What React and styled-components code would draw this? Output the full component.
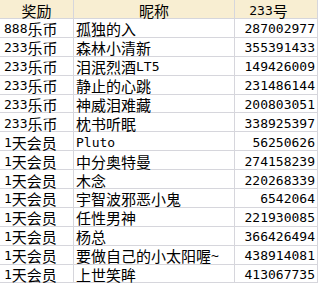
import React from 'react';
import styled, { createGlobalStyle } from 'styled-components';

// ============================================================ styles

const GlobalStyle = createGlobalStyle`
  body {
    margin: 0;
    background: #fff;
  }
`;

const Sheet = styled.div`
  display: grid;
  grid-template-columns: 74px 161px 83px;
  grid-template-rows: 19px repeat(14, 18.9px);
  font-family: "Noto Sans CJK SC", sans-serif;
  font-size: 15px;
  color: #000;
`;

const Cell = styled.div`
  box-sizing: border-box;
  display: flex;
  align-items: center;
  justify-content: ${p => p.$align === 'right' ? 'flex-end' : p.$align === 'center' ? 'center' : 'flex-start'};
  padding: 2px ${p => p.$padR ?? 2}px 0 ${p => p.$padL ?? 2}px;
  border-right: 1px solid #d6d6dc;
  border-bottom: 1px solid #d6d6dc;
  background: ${p => p.$head ? '#f8eed2' : '#fff'};
  white-space: nowrap;
  line-height: 15px;
`;

const Latin = styled.span`
  font-family: "DejaVu Sans Mono", monospace;
  font-size: 13px;
`;

// ============================================================ data

const rows = [
    ['888乐币', '孤独的入', '287002977'],
    ['233乐币', '森林小清新', '355391433'],
    ['233乐币', '泪泯烈酒LT5', '149426009'],
    ['233乐币', '静止的心跳', '231486144'],
    ['233乐币', '神威泪难藏', '200803051'],
    ['233乐币', '枕书听眠', '338925397'],
    ['1天会员', 'Pluto', '56250626'],
    ['1天会员', '中分奥特曼', '274158239'],
    ['1天会员', '木念', '220268339'],
    ['1天会员', '宇智波邪恶小鬼', '6542064'],
    ['1天会员', '任性男神', '221930085'],
    ['1天会员', '杨总', '366426494'],
    ['1天会员', '要做自己的小太阳喔~', '438914081'],
    ['1天会员', '上世笑眸', '413067735'],
];

// latin runs get the narrow mono face, like the sheet's half-width glyphs
const mix = (text) =>
    text.split(/([\x20-\x7e]+)/).filter(Boolean).map((part, i) =>
        /^[\x20-\x7e]+$/.test(part) ? <Latin key={i}>{part}</Latin> : part
    );

// ============================================================ component

const App = () => (
    <>
        <GlobalStyle />
        <Sheet>
            <Cell $head $align="center">奖励</Cell>
            <Cell $head $align="center">昵称</Cell>
            <Cell $head $align="center" $padR={17}>{mix('233号')}</Cell>

            {rows.map(([reward, name, id]) => (
                <React.Fragment key={id}>
                    <Cell $padL={4}>{mix(reward)}</Cell>
                    <Cell $padL={2}>{mix(name)}</Cell>
                    <Cell $align="right" $padR={2}>{mix(id)}</Cell>
                </React.Fragment>
            ))}
        </Sheet>
    </>
);

export default App;
